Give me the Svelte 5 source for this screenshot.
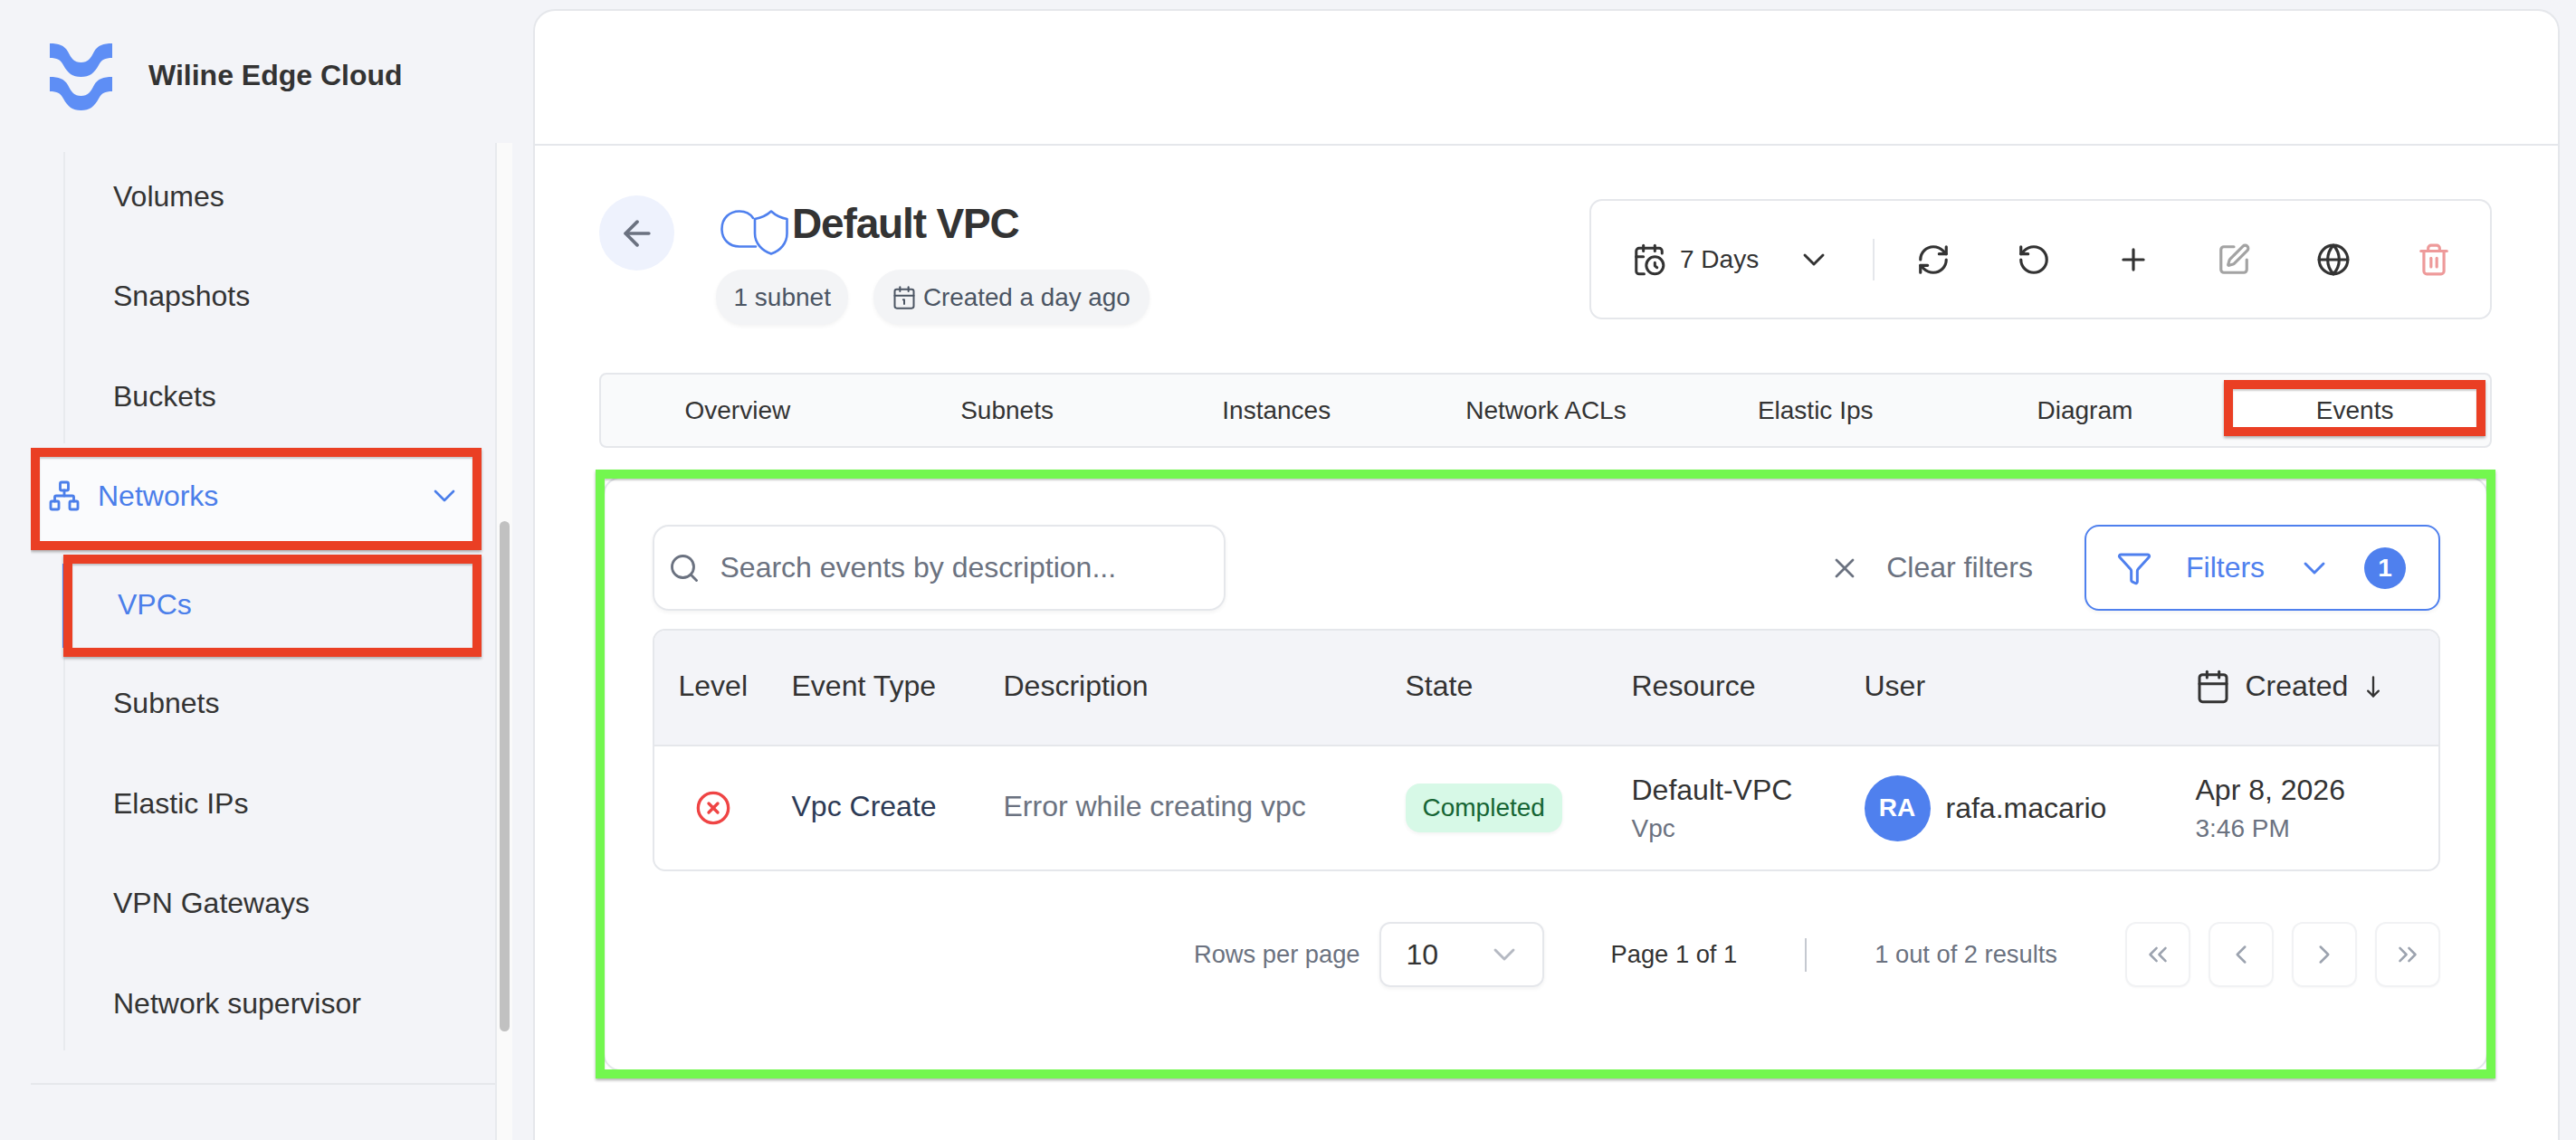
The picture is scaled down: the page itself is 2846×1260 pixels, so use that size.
<script>
  const storage = ['Volumes', 'Snapshots', 'Buckets'];
  const network = ['Subnets', 'Elastic IPs', 'VPN Gateways', 'Network supervisor'];
  const tabs = ['Overview', 'Subnets', 'Instances', 'Network ACLs', 'Elastic Ips', 'Diagram', 'Events'];
  const heads = ['Level', 'Event Type', 'Description', 'State', 'Resource', 'User'];
  const wave = 'M0 0C10 0 16 2 20 9C24 17 27 21 34.5 21C42 21 45 17 49 9C53 2 59 0 69 0V16C61 16 57 18 54 24C49 33 44 37 34.5 37C25 37 20 33 15 24C12 18 8 16 0 16Z';
  const pager = [
    ['m11 17-5-5 5-5', 'm18 17-5-5 5-5'],
    ['m15 18-6-6 6-6'],
    ['m9 18 6-6-6-6'],
    ['m6 17 5-5-5-5', 'm13 17 5-5-5-5']
  ];
  const actions = [
    { cls: 'dark', paths: ['M3 12a9 9 0 0 1 9-9 9.75 9.75 0 0 1 6.74 2.74L21 8', 'M21 3v5h-5', 'M21 12a9 9 0 0 1-9 9 9.75 9.75 0 0 1-6.74-2.74L3 16', 'M8 16H3v5'] },
    { cls: 'dark', paths: ['M3 12a9 9 0 1 0 9-9 9.75 9.75 0 0 0-6.74 2.74L3 8', 'M3 3v5h5'] },
    { cls: 'dark', paths: ['M5 12h14', 'M12 5v14'] },
    { cls: 'muted', paths: ['M12 3H5a2 2 0 0 0-2 2v14a2 2 0 0 0 2 2h14a2 2 0 0 0 2-2v-7', 'M18.375 2.625a1 1 0 0 1 3 3l-9.013 9.014a2 2 0 0 1-.853.505l-2.873.84a.5.5 0 0 1-.62-.62l.84-2.873a2 2 0 0 1 .506-.852z'] },
    { cls: 'dark', paths: ['M22 12A10 10 0 1 1 2 12a10 10 0 0 1 20 0', 'M12 2a14.5 14.5 0 0 0 0 20 14.5 14.5 0 0 0 0-20', 'M2 12h20'] },
    { cls: 'danger', paths: ['M3 6h18', 'M19 6v14c0 1-1 2-2 2H7c-1 0-2-1-2-2V6', 'M8 6V4c0-1 1-2 2-2h4c1 0 2 1 2 2v2', 'M10 11v6', 'M14 11v6'] }
  ];
</script>

<div class="app">
  <aside class="sidebar">
    <div class="brand">
      <svg class="logo" viewBox="0 0 69 74">
        <path d={wave} />
        <path transform="translate(0 37)" d={wave} />
      </svg>
      <span>Wiline Edge Cloud</span>
    </div>

    <div class="scroller">
      <nav class="nav">
        <div class="group first">
          {#each storage as item}<div class="item">{item}</div>{/each}
        </div>

        <div class="parent mark">
          <svg class="net" viewBox="0 0 24 24"><rect x="16" y="16" width="6" height="6" rx="1" /><rect x="2" y="16" width="6" height="6" rx="1" /><rect x="9" y="2" width="6" height="6" rx="1" /><path d="M5 16v-3a1 1 0 0 1 1-1h12a1 1 0 0 1 1 1v3" /><path d="M12 12V8" /></svg>
          <span>Networks</span>
          <svg class="chev" viewBox="0 0 24 24"><path d="m6 9 6 6 6-6" /></svg>
        </div>

        <div class="group second">
          <div class="item current mark">VPCs</div>
          {#each network as item}<div class="item">{item}</div>{/each}
        </div>
      </nav>
      <div class="track"><div class="thumb"></div></div>
    </div>
  </aside>

  <main class="main">
    <div class="topbar"></div>
    <div class="content">
      <header class="head">
        <button class="back" aria-label="Back">
          <svg viewBox="0 0 24 24"><path d="m12 19-7-7 7-7" /><path d="M19 12H5" /></svg>
        </button>
        <div class="heading">
          <div class="title">
            <svg class="vpc" viewBox="0 0 75 50">
              <path d="M36 9C32 3 27 1.500 21 1.500C10 1.500 1.500 9 1.500 21C1.500 33 10 40.500 21 40.500L39 40.500" />
              <path d="M56 1.500C50 7 44 9 38 10V26C38 37 46 45 56 48.500C66 45 73.500 37 73.500 26V10C67 9 62 7 56 1.500Z" />
            </svg>
            <h1>Default VPC</h1>
          </div>
          <div class="pills">
            <span class="pill">1 subnet</span>
            <span class="pill created-pill">
              <svg viewBox="0 0 24 24"><path d="M11 14h1v4" /><path d="M16 2v4" /><path d="M3 10h18" /><path d="M8 2v4" /><rect x="3" y="4" width="18" height="18" rx="2" /></svg>
              Created a day ago
            </span>
          </div>
        </div>
        <div class="actions">
          <div class="range">
            <svg class="clock" viewBox="0 0 24 24"><path d="M21 7.5V6a2 2 0 0 0-2-2H5a2 2 0 0 0-2 2v14a2 2 0 0 0 2 2h3.500" /><path d="M16 2v4" /><path d="M8 2v4" /><path d="M3 10h5" /><path d="M17.500 17.500 16 16.300V14" /><circle cx="16" cy="16" r="6" /></svg>
            <span>7 Days</span>
            <svg class="down" viewBox="0 0 24 24"><path d="m6 9 6 6 6-6" /></svg>
          </div>
          <div class="sep"></div>
          {#each actions as a}
            <button class="act {a.cls}" aria-label="action">
              <svg viewBox="0 0 24 24">{#each a.paths as d}<path {d} />{/each}</svg>
            </button>
          {/each}
        </div>
      </header>

      <div class="tabs">
        {#each tabs as t}
          <div class="tab" class:mark={t === 'Events'} class:on={t === 'Events'}>{t}</div>
        {/each}
      </div>

      <section class="panel">
        <div class="toolbar">
          <div class="search">
            <svg viewBox="0 0 24 24"><circle cx="11" cy="11" r="8" /><path d="m21 21-4.300-4.300" /></svg>
            <span>Search events by description...</span>
          </div>
          <div class="clear">
            <svg viewBox="0 0 24 24"><path d="M18 6 6 18" /><path d="m6 6 12 12" /></svg>
            <span>Clear filters</span>
          </div>
          <div class="filters">
            <svg class="funnel" viewBox="0 0 24 24"><path d="M10 20a1 1 0 0 0 .553.895l2 1A1 1 0 0 0 14 21v-7a2 2 0 0 1 .517-1.341L21.740 4.670A1 1 0 0 0 21 3H3a1 1 0 0 0-.742 1.670l7.225 7.989A2 2 0 0 1 10 14z" /></svg>
            <span>Filters</span>
            <svg class="fchev" viewBox="0 0 24 24"><path d="m6 9 6 6 6-6" /></svg>
            <b>1</b>
          </div>
        </div>

        <div class="table">
          <div class="tr thead">
            {#each heads as h}<div>{h}</div>{/each}
            <div class="created">
              <svg class="cal" viewBox="0 0 24 24"><path d="M8 2v4" /><path d="M16 2v4" /><rect x="3" y="4" width="18" height="18" rx="2" /><path d="M3 10h18" /></svg>
              <span>Created</span>
              <svg class="sort" viewBox="0 0 24 24"><path d="M12 3v18" /><path d="m7 16 5 5 5-5" /></svg>
            </div>
          </div>
          <div class="tr tbody">
            <div class="level">
              <svg viewBox="0 0 24 24"><circle cx="12" cy="12" r="10" /><path d="m15 9-6 6" /><path d="m9 9 6 6" /></svg>
            </div>
            <div class="type">Vpc Create</div>
            <div class="desc">Error while creating vpc</div>
            <div><span class="badge">Completed</span></div>
            <div class="stack"><span>Default-VPC</span><small>Vpc</small></div>
            <div class="user"><span class="avatar">RA</span><span>rafa.macario</span></div>
            <div class="stack when"><span>Apr 8, 2026</span><small>3:46 PM</small></div>
          </div>
        </div>

        <div class="pagination">
          <span class="grey">Rows per page</span>
          <div class="select">
            <span>10</span>
            <svg viewBox="0 0 24 24"><path d="m6 9 6 6 6-6" /></svg>
          </div>
          <span class="page">Page 1 of 1</span>
          <span class="pipe"></span>
          <span class="grey results">1 out of 2 results</span>
          <div class="pager">
            {#each pager as paths}
              <button class="pg" aria-label="page">
                <svg viewBox="0 0 24 24">{#each paths as d}<path {d} />{/each}</svg>
              </button>
            {/each}
          </div>
        </div>
      </section>
    </div>
  </main>
</div>

<style>
  :global(body) { margin: 0; background: #f3f4f8; }
  .app { width: 2846px; height: 1260px; overflow: hidden; display: flex; background: #f3f4f8; color: #333;
    font-family: "Liberation Sans", Arial, sans-serif; font-size: 32px; }
  svg { fill: none; stroke: currentColor; stroke-width: 2; stroke-linecap: round; stroke-linejoin: round; display: block; flex: none; }
  button { border: 0; padding: 0; background: none; font: inherit; color: inherit; }

  /* sidebar */
  .sidebar { width: 589px; flex: none; display: flex; flex-direction: column; }
  .brand { height: 158px; flex: none; display: flex; align-items: center; padding-left: 55px; gap: 40px; font-weight: 700; }
  .logo { width: 69px; height: 74px; stroke: none; fill: #5e8ef5; margin-top: 11px; }
  .brand span { margin-top: 8px; }
  .scroller { flex: 1; display: flex; min-height: 0; }
  .nav { width: 513px; height: 1041px; margin-left: 34px; box-sizing: border-box; flex: none;
    border-bottom: 2px solid #e5e7eb; overflow: hidden; }
  .group { margin-left: 36px; border-left: 2px solid #e8eaee; display: flex; flex-direction: column; gap: 18.5px; }
  .group.first { margin-top: 10px; padding: 3px 0 6px; }
  .group.second { margin-top: 5px; padding-bottom: 6px; }
  .item { height: 92px; display: flex; align-items: center; padding-left: 53px; flex: none; }
  .mark { border: 10px solid #ea3f24; box-sizing: border-box;
    box-shadow: 0 2px 3px rgba(0,0,0,.3), inset 0 2px 2px rgba(0,0,0,.2); }
  .parent { margin-top: 5px; width: 497.6px; height: 112.7px; background: #fafbfd; display: flex; align-items: center; color: #4b7eea;
    padding: 0 11px 6px 9px; }
  .net { width: 36px; height: 36px; margin-right: 19px; stroke-width: 1.9; }
  .parent .chev { width: 40px; height: 40px; margin-left: auto; stroke-width: 1.6; }
  .item.current { position: relative; height: 113px; margin: 0 0 -12.500px -2px; width: 461.6px; color: #4b7eea; padding: 0 0 2px 50px; }
  .item.current::before { content: ""; position: absolute; left: -11px; top: 0; bottom: 0; width: 1px; background: #4b7eea; }
  .track { width: 19px; flex: none; background: #fafafa; border-left: 2px solid #e8eaee; box-sizing: border-box; height: 100%; }
  .thumb { width: 11px; height: 564px; margin: 418px 0 0 3px; border-radius: 6px; background: #c1c1c1; }

  /* main card */
  .main { flex: 1; margin: 10px 18px 0 0; background: #fff; border: 2px solid #e5e7eb; border-bottom: 0; border-radius: 24px 24px 0 0; min-width: 0; }
  .topbar { height: 147px; border-bottom: 2px solid #e5e7eb; }
  .content { padding: 55px 73px 0 71px; }

  .head { display: flex; align-items: flex-start; height: 143px; margin-bottom: 53px; }
  .back { width: 83px; height: 83px; border-radius: 50%; background: #eef2fd; color: #6b7280; display: flex; align-items: center; justify-content: center; margin-right: 46px; flex: none; }
  .back svg { width: 44px; height: 44px; stroke-width: 2; }
  .heading { display: flex; flex-direction: column; }
  .title { height: 82px; display: flex; align-items: center; padding-left: 5px; }
  .vpc { width: 75px; height: 50px; stroke: #4f80ee; stroke-width: 2.6; margin: 0 4px 0 0; }
  h1 { margin: 0 0 20px; font-size: 46px; line-height: 1; letter-spacing: -1.15px; font-weight: 700; color: #333; }
  .pills { display: flex; gap: 28px; }
  .pill { height: 61px; display: flex; align-items: center; padding: 0 19.5px; border-radius: 30px; background: #f3f4f6; color: #4b5563; font-size: 28px;
    box-shadow: 0 2px 4px rgba(0,0,0,.05); }
  .created-pill { padding: 0 21px 0 19.5px; font-size: 27.8px; }
  .pill svg { width: 28px; height: 28px; margin-right: 7px; stroke-width: 1.7; }
  .actions { margin: 4px 0 0 auto; width: 997px; height: 133px; box-sizing: border-box; border: 2px solid #e5e7eb; border-radius: 14px;
    display: flex; align-items: center; padding-left: 45px; font-size: 28px; }
  .range { display: flex; align-items: center; width: 266px; }
  .clock { width: 38px; height: 38px; margin-right: 15px; stroke-width: 1.9; }
  .down { width: 40px; height: 40px; margin-left: 41px; stroke-width: 1.75; }
  .sep { width: 2px; height: 46px; background: #e5e7eb; margin: 0 10px 0 0; }
  .act { width: 110.5px; height: 40px; display: flex; align-items: center; justify-content: center; }
  .act svg { width: 38px; height: 38px; }
  .dark { color: #333; } .muted { color: #a3a3a3; } .danger { color: #ee9a9a; }

  .tabs { height: 83px; box-sizing: border-box; border: 2px solid #e5e7eb; border-radius: 8px; background: #f9fafb; padding: 6px 1px 11px 2px;
    display: grid; grid-template-columns: repeat(7, 1fr); font-size: 28px; margin-bottom: 32px; }
  .tab { display: flex; align-items: center; justify-content: center; padding-top: 5px; }
  .tab.on { background: #fff; margin: 0 4px 0 5px; padding-top: 5px; box-sizing: border-box; }

  /* annotated events panel, the green frame lies over the panel's own edge */
  .panel { position: relative; margin: 0 4px; height: 657px; box-sizing: border-box; background: #fff; border: 2px solid #e5e7eb; border-radius: 20px;
    padding: 51px 51px 0 52.5px; }
  .panel::after { content: ""; position: absolute; inset: -10px; border: 10px solid #73f74f; pointer-events: none;
    box-shadow: 0 2px 3px rgba(0,0,0,.3), inset 0 2px 2px rgba(0,0,0,.2); }

  .toolbar { display: flex; align-items: center; height: 95px; margin-bottom: 20px; }
  .search { width: 633px; height: 95px; box-sizing: border-box; border: 2px solid #e5e7eb; border-radius: 18px; display: flex; align-items: center; padding-left: 15px;
    color: #6b7280; box-shadow: 0 2px 4px rgba(0,0,0,.05); }
  .search svg { width: 36px; height: 36px; margin-right: 22px; stroke-width: 1.9; }
  .clear { margin-left: auto; display: flex; align-items: center; color: #6b7280; margin-right: 57px; }
  .clear svg { width: 36px; height: 36px; margin-right: 28px; stroke-width: 1.8; }
  .filters { width: 393px; height: 95px; box-sizing: border-box; border: 2px solid #4f80ee; border-radius: 16px; display: flex; align-items: center; color: #4f80ee; padding-left: 33px;
    box-shadow: 0 2px 4px rgba(0,0,0,.05); }
  .funnel { width: 40px; height: 40px; margin-right: 37px; stroke-width: 1.8; }
  .fchev { width: 40px; height: 40px; margin-left: 35px; stroke-width: 1.75; }
  .filters b { width: 46px; height: 46px; margin-left: 35px; border-radius: 50%; background: #4f80ee; color: #fff; display: flex; align-items: center; justify-content: center; font-size: 28px; }

  .table { width: 1975.5px; height: 268px; box-sizing: border-box; border: 2px solid #e5e7eb; border-radius: 14px; overflow: hidden; }
  .tr { display: grid; grid-template-columns: 152px 234px 444px 250px 257px 368px 265px; align-items: center; }
  .thead { height: 128px; box-sizing: border-box; background: #f3f4f8; border-bottom: 2px solid #e5e7eb; padding-bottom: 3px; }
  .thead > div:first-child { padding-left: 27px; }
  .created { display: flex; align-items: center; margin-left: -3px; }
  .cal { width: 40px; height: 40px; margin-right: 16px; stroke-width: 1.8; }
  .sort { width: 28px; height: 28px; margin-left: 14px; stroke-width: 2; }
  .tbody { height: 136px; }
  .level { padding-left: 45px; color: #ef4444; }
  .level svg { width: 40px; height: 40px; }
  .type { color: #2c3a55; margin-top: -3px; }
  .desc { color: #6b7280; margin-top: -3px; }
  .badge { display: inline-flex; align-items: center; height: 54px; padding: 0 19px; border-radius: 16px; background: #d7f9e7; color: #166534; font-size: 28px;
    box-shadow: 0 2px 4px rgba(0,0,0,.05); }
  .stack { display: flex; flex-direction: column; }
  .stack small { font-size: 28px; color: #6b7280; margin-top: 8px; }
  .when { margin-left: -2px; }
  .user { display: flex; align-items: center; gap: 17px; }
  .avatar { width: 73px; height: 73px; border-radius: 50%; background: #4f80ee; color: #fff; font-weight: 700; font-size: 28px; display: flex; align-items: center; justify-content: center; flex: none; }

  .pagination { display: flex; align-items: center; justify-content: flex-end; margin-top: 56px; height: 72px; font-size: 27.3px; }
  .grey { color: #6b7280; }
  .select { width: 182px; height: 72px; box-sizing: border-box; margin-left: 21px; border: 2px solid #e5e7eb; border-radius: 12px; display: flex; align-items: center; padding: 0 28px; font-size: 32px;
    box-shadow: 0 2px 4px rgba(0,0,0,.05); }
  .select svg { width: 40px; height: 40px; margin-left: auto; margin-right: -6px; color: #b5b9c2; stroke-width: 1.75; }
  .page { margin-left: 74px; }
  .pipe { width: 2px; height: 37px; background: #c5c9d0; margin: 0 75px 0 75px; }
  .results { margin-right: 75px; }
  .pager { display: flex; gap: 20px; }
  .pg { width: 72px; height: 72px; box-sizing: border-box; border: 2px solid #f1f2f4; border-radius: 12px; color: #9ca3af; display: flex; align-items: center; justify-content: center;
    box-shadow: 0 1px 2px rgba(0,0,0,.03); }
  .pg svg { width: 34px; height: 34px; stroke-width: 1.8; }
</style>
